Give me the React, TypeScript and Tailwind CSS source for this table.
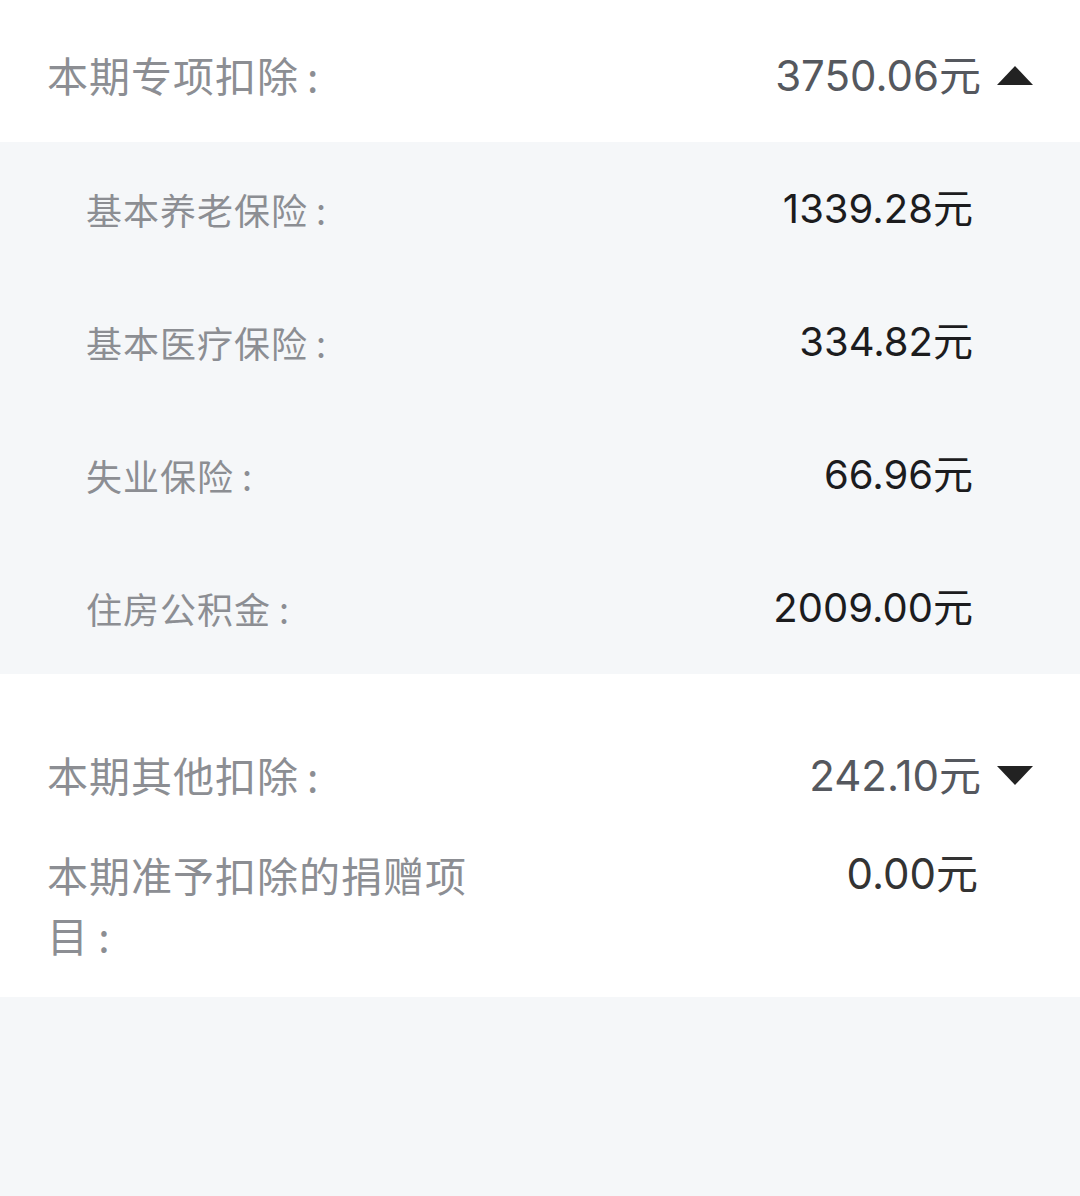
const cjk = { fontFamily: "'Noto Sans CJK SC', sans-serif" };
const num = { fontFamily: "Inter, 'Noto Sans CJK SC', sans-serif" };

const ITEMS = [
  { label: "基本养老保险", value: "1339.28元" },
  { label: "基本医疗保险", value: "334.82元" },
  { label: "失业保险", value: "66.96元" },
  { label: "住房公积金", value: "2009.00元" },
];

function Caret({ up }: { up: boolean }) {
  return (
    <svg width="36" height="19" viewBox="0 0 36 19" className="shrink-0">
      {up ? <polygon points="18,0 36,19 0,19" fill="#222" /> : <polygon points="0,0 36,0 18,19" fill="#222" />}
    </svg>
  );
}

function Label({ text, size }: { text: string; size: string }) {
  return (
    <span className={`${size} text-[#8c8e93] tracking-[1px]`} style={cjk}>
      {text}
      <span className="ml-[8px]">:</span>
    </span>
  );
}

export default function App() {
  return (
    <div className="min-h-[1196px] bg-[#f5f7f9]">
      <div className="bg-white h-[142px] pt-[8px] pl-[47px] pr-[47px] flex items-center justify-between">
        <Label text="本期专项扣除" size="text-[41px]" />
        <div className="flex items-center gap-[16px]">
          <span className="text-[42px] text-[#55585e]" style={num}>3750.06元</span>
          <Caret up />
        </div>
      </div>

      <div className="bg-[#f5f7f9]">
        {ITEMS.map((it) => (
          <div key={it.label} className="h-[133px] pl-[86px] pr-[107px] flex items-center justify-between">
            <Label text={it.label} size="text-[36px]" />
            <span className="text-[40px] text-[#1c1c1e]" style={num}>{it.value}</span>
          </div>
        ))}
      </div>

      <div className="bg-white pt-[71px] pb-[33px] pl-[47px]">
        <div className="h-[60px] pr-[47px] flex items-center justify-between">
          <Label text="本期其他扣除" size="text-[41px]" />
          <div className="flex items-center gap-[16px]">
            <span className="text-[42px] text-[#55585e]" style={num}>242.10元</span>
            <Caret up={false} />
          </div>
        </div>
        <div className="mt-[39px] pr-[102px] flex items-start justify-between">
          <p className="w-[425px] text-[41px] leading-[60px] text-[#8c8e93] tracking-[1px]" style={cjk}>
            本期准予扣除的捐赠项目{"\u2009:"}
          </p>
          <span className="text-[42px] leading-[60px] text-[#333]" style={num}>0.00元</span>
        </div>
      </div>
    </div>
  );
}
